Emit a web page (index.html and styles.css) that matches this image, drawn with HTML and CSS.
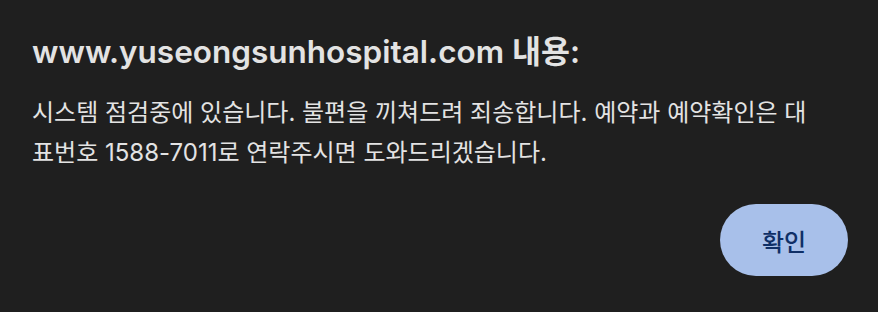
FILE: index.html
```html
<!DOCTYPE html>
<html lang="ko">
<head>
<meta charset="utf-8">
<title>www.yuseongsunhospital.com 내용</title>
<link rel="stylesheet" href="styles.css">
</head>
<body>
<div class="dialog" role="alertdialog">
  <h1 class="title">www.yuseongsunhospital.com 내용:</h1>
  <p class="message">시스템 점검중에 있습니다. 불편을 끼쳐드려 죄송합니다. 예약과 예약확인은 대<br>표번호 1588-7011로 연락주시면 도와드리겠습니다.</p>
  <div class="actions">
    <button class="btn-ok" type="button">확인</button>
  </div>
</div>
</body>
</html>
```

FILE: styles.css
```css
html, body {
  margin: 0;
  padding: 0;
  background: #1f1f1f;
}
body {
  width: 878px;
  height: 312px;
  overflow: hidden;
  font-family: Inter, "Noto Sans CJK KR", sans-serif;
  color: #e3e3e3;
}
.dialog {
  padding: 32px 30px 0 32px;
}
.title {
  margin: 0;
  font-size: 31.5px;
  line-height: 40px;
  font-weight: 600;
  white-space: nowrap;
}
.message {
  margin: 21px 0 0;
  font-size: 24px;
  line-height: 40px;
  font-weight: 400;
  white-space: nowrap;
}
.actions {
  display: flex;
  justify-content: flex-end;
  margin-top: 31px;
}
.btn-ok {
  width: 128px;
  height: 72px;
  border: 0;
  border-radius: 36px;
  background: #a8c0ea;
  color: #0f2f66;
  font-family: Inter, "Noto Sans CJK KR", sans-serif;
  font-size: 24px;
  font-weight: 500;
  padding: 0;
}
```
